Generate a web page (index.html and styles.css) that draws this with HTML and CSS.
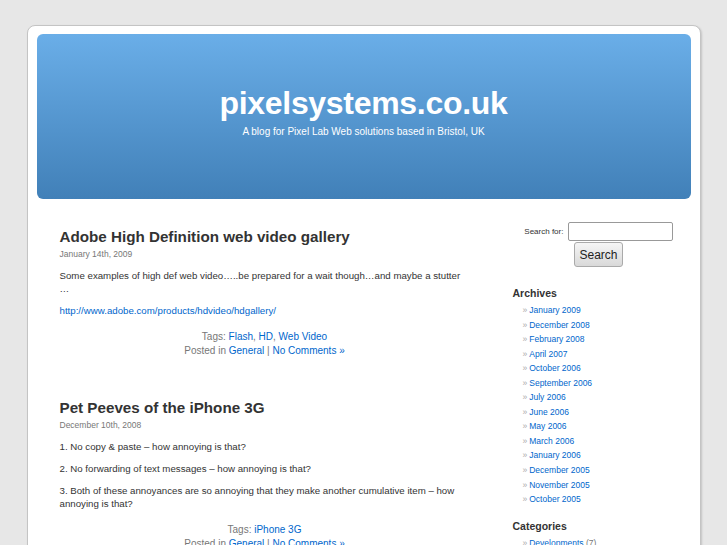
FILE: index.html
```html
<!DOCTYPE html>
<html lang="en">
<head>
  <meta charset="UTF-8" />
  <title>pixelsystems.co.uk</title>
  <link rel="stylesheet" href="styles.css">
</head>
<body>

  <div class="page">
    <div class="header">
      <h1><a href="#">pixelsystems.co.uk</a></h1>
      <div class="description">A blog for Pixel Lab Web solutions based in Bristol, UK</div>
    </div>

    <div class="main">
      <div class="content">

        <div class="post">
          <h2><a href="#">Adobe High Definition web video gallery</a></h2>
          <div class="date">January 14th, 2009</div>
          <div class="entry">
            <p>Some examples of high def web video&hellip;..be prepared for a wait though&hellip;and maybe a stutter &hellip;</p>
            <p><a href="#">http://www.adobe.com/products/hdvideo/hdgallery/</a></p>
          </div>
          <p class="meta">Tags: <a href="#">Flash</a>, <a href="#">HD</a>, <a href="#">Web Video</a><br>
            Posted in <a href="#">General</a> | <a href="#">No Comments &raquo;</a></p>
        </div>

        <div class="post">
          <h2><a href="#">Pet Peeves of the iPhone 3G</a></h2>
          <div class="date">December 10th, 2008</div>
          <div class="entry">
            <p>1. No copy &amp; paste &ndash; how annoying is that?</p>
            <p>2. No forwarding of text messages &ndash; how annoying is that?</p>
            <p>3. Both of these annoyances are so annoying that they make another cumulative item &ndash; how annoying is that?</p>
          </div>
          <p class="meta">Tags: <a href="#">iPhone 3G</a><br>
            Posted in <a href="#">General</a> | <a href="#">No Comments &raquo;</a></p>
        </div>

      </div>

      <div class="sidebar">
        <form class="search">
          <label for="s">Search for:</label>
          <input type="text" id="s" />
          <button type="submit">Search</button>
        </form>

        <h2>Archives</h2>
        <ul>
          <li><a href="#">January 2009</a></li>
          <li><a href="#">December 2008</a></li>
          <li><a href="#">February 2008</a></li>
          <li><a href="#">April 2007</a></li>
          <li><a href="#">October 2006</a></li>
          <li><a href="#">September 2006</a></li>
          <li><a href="#">July 2006</a></li>
          <li><a href="#">June 2006</a></li>
          <li><a href="#">May 2006</a></li>
          <li><a href="#">March 2006</a></li>
          <li><a href="#">January 2006</a></li>
          <li><a href="#">December 2005</a></li>
          <li><a href="#">November 2005</a></li>
          <li><a href="#">October 2005</a></li>
        </ul>

        <h2 class="cats">Categories</h2>
        <ul>
          <li><a href="#">Developments</a> (7)</li>
          <li><a href="#">General</a> (12)</li>
        </ul>
      </div>
    </div>
  </div>

</body>
</html>
```

FILE: styles.css
```css
body {
  margin: 0;
  padding-top: 25px;
  background: #e7e7e7;
  font-family: "Liberation Sans", Arial, sans-serif;
  color: #333;
}
a {
  color: #06c;
  text-decoration: none;
}
.page {
  width: 654px;
  margin: 0 auto;
  padding: 8px 9px 40px;
  background: #fff;
  border: 1px solid #c4c4c4;
  border-radius: 8px;
  box-shadow: 1px 1px 2px rgba(0,0,0,0.15);
}
.header {
  height: 165px;
  box-sizing: border-box;
  padding-top: 51px;
  border-radius: 6px;
  background: linear-gradient(#6aaee8, #4180b8);
  text-align: center;
}
.header h1 {
  margin: 0;
  font-size: 32px;
  line-height: 36px;
  letter-spacing: -0.3px;
}
.header h1 a {
  color: #fff;
}
.description {
  margin-top: 4px;
  font-size: 10px;
  line-height: 14px;
  color: #fff;
}
.main {
  display: flex;
  gap: 43px;
  padding-left: 23px;
}
.content {
  width: 410px;
  padding-top: 28px;
}
.post {
  margin-bottom: 40px;
}
.post h2 {
  margin: 0;
  font-size: 15.2px;
  line-height: 20px;
}
.post h2 a {
  color: #333;
}
.date {
  margin-top: 1px;
  font-size: 8.5px;
  line-height: 12px;
  color: #777;
}
.entry p {
  margin: 9px 0 0;
  font-size: 9.7px;
  line-height: 13px;
}
.meta {
  margin: 13px 0 0;
  font-size: 10px;
  line-height: 14px;
  text-align: center;
  color: #777;
}
.sidebar {
  width: 172px;
  padding-top: 23px;
}
.search {
  text-align: center;
  font-size: 8px;
}
.search input {
  width: 105px;
  height: 19px;
  box-sizing: border-box;
  margin: 0 0 0 2px;
  border: 1px solid #999;
  border-radius: 2px;
  vertical-align: middle;
}
.search button {
  display: block;
  margin: 1px auto 0;
  padding: 0 4px;
  height: 25px;
  font-family: "Liberation Sans", Arial, sans-serif;
  font-size: 12px;
  color: #222;
  background: linear-gradient(#f5f5f5, #d9d9d9);
  border: 1px solid #aaa;
  border-radius: 3px;
}
.sidebar h2 {
  margin: 19px 0 0;
  font-size: 10.5px;
  line-height: 14px;
}
.sidebar h2.cats {
  margin-top: 12px;
}
.sidebar ul {
  list-style: none;
  margin: 3px 0 0;
  padding: 0 0 0 10px;
}
.sidebar li {
  font-size: 8.5px;
  line-height: 14.54px;
  color: #777;
}
.sidebar li::before {
  content: "\00BB";
  color: #aaa;
  margin-right: 2px;
}
```
